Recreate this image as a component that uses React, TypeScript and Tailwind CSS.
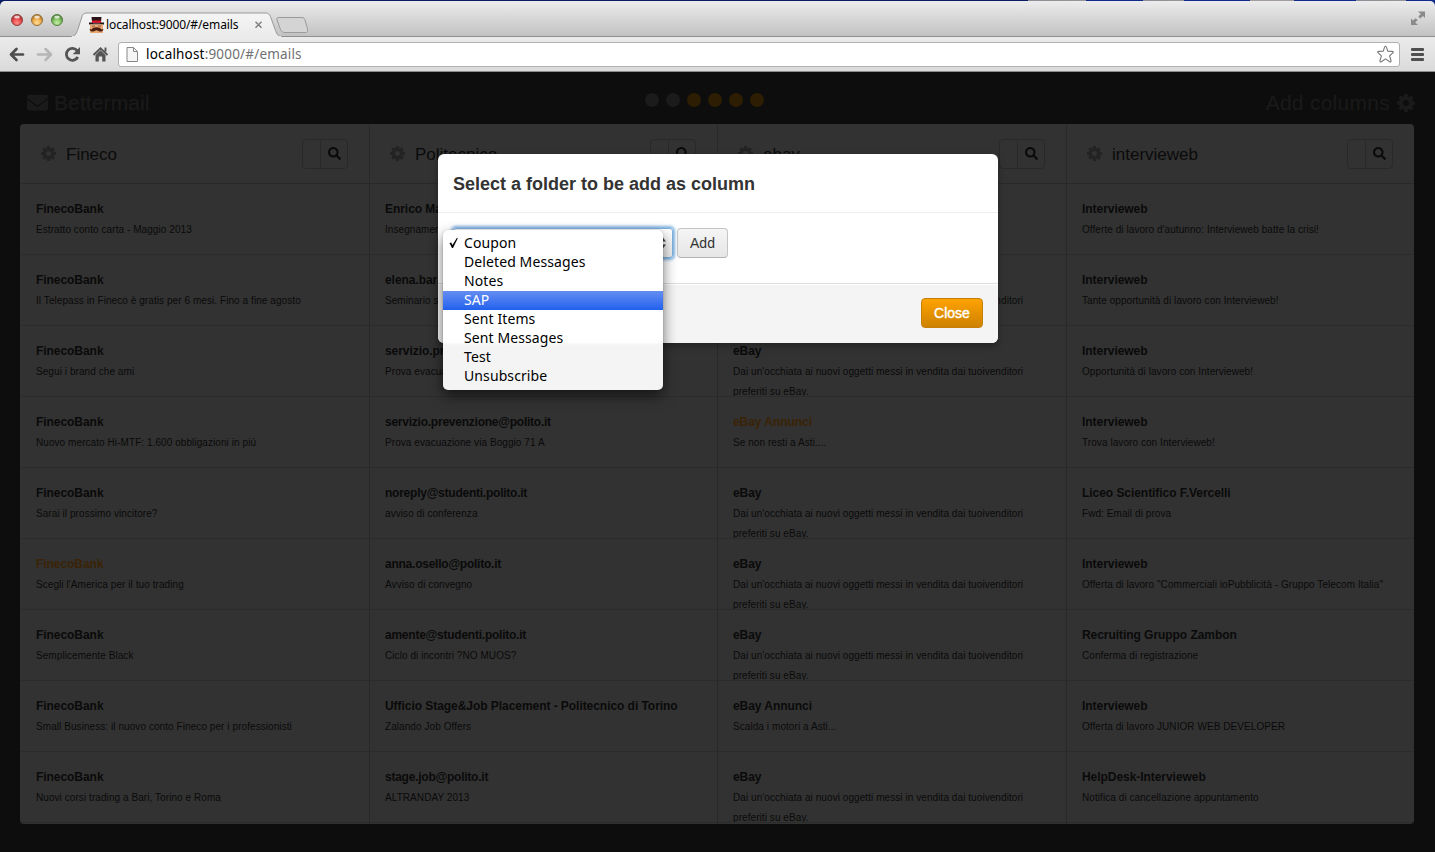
import React from 'react';
import { FaEnvelope, FaSearch } from 'react-icons/fa';

type Mail = { from: string; subject: string; unread?: boolean };
const EBAY = "Dai un'occhiata ai nuovi oggetti messi in vendita dai tuoivenditori preferiti su eBay.";

const columns: { name: string; mails: Mail[] }[] = [
  {
    name: 'Fineco',
    mails: [
      { from: 'FinecoBank', subject: 'Estratto conto carta - Maggio 2013' },
      { from: 'FinecoBank', subject: 'Il Telepass in Fineco è gratis per 6 mesi. Fino a fine agosto' },
      { from: 'FinecoBank', subject: 'Segui i brand che ami' },
      { from: 'FinecoBank', subject: 'Nuovo mercato Hi-MTF: 1.600 obbligazioni in più' },
      { from: 'FinecoBank', subject: 'Sarai il prossimo vincitore?' },
      { from: 'FinecoBank', subject: "Scegli l'America per il tuo trading", unread: true },
      { from: 'FinecoBank', subject: 'Semplicemente Black' },
      { from: 'FinecoBank', subject: 'Small Business: il nuovo conto Fineco per i professionisti' },
      { from: 'FinecoBank', subject: 'Nuovi corsi trading a Bari, Torino e Roma' },
    ],
  },
  {
    name: 'Politecnico',
    mails: [
      { from: 'Enrico Macii', subject: 'Insegnamenti' },
      { from: 'elena.baralis', subject: 'Seminario st' },
      { from: 'servizio.prev', subject: 'Prova evacuaz' },
      { from: 'servizio.prevenzione@polito.it', subject: 'Prova evacuazione via Boggio 71 A' },
      { from: 'noreply@studenti.polito.it', subject: 'avviso di conferenza' },
      { from: 'anna.osello@polito.it', subject: 'Avviso di convegno' },
      { from: 'amente@studenti.polito.it', subject: 'Ciclo di incontri ?NO MUOS?' },
      { from: 'Ufficio Stage&Job Placement - Politecnico di Torino', subject: 'Zalando Job Offers' },
      { from: 'stage.job@polito.it', subject: 'ALTRANDAY 2013' },
    ],
  },
  {
    name: 'ebay',
    mails: [
      { from: 'eBay', subject: 'Scalda i motori a Asti...' },
      { from: 'eBay', subject: EBAY },
      { from: 'eBay', subject: EBAY },
      { from: 'eBay Annunci', subject: 'Se non resti a Asti....', unread: true },
      { from: 'eBay', subject: EBAY },
      { from: 'eBay', subject: EBAY },
      { from: 'eBay', subject: EBAY },
      { from: 'eBay Annunci', subject: 'Scalda i motori a Asti...' },
      { from: 'eBay', subject: EBAY },
    ],
  },
  {
    name: 'intervieweb',
    mails: [
      { from: 'Intervieweb', subject: "Offerte di lavoro d'autunno: Intervieweb batte la crisi!" },
      { from: 'Intervieweb', subject: 'Tante opportunità di lavoro con Intervieweb!' },
      { from: 'Intervieweb', subject: 'Opportunità di lavoro con Intervieweb!' },
      { from: 'Intervieweb', subject: 'Trova lavoro con Intervieweb!' },
      { from: 'Liceo Scientifico F.Vercelli', subject: 'Fwd: Email di prova' },
      { from: 'Intervieweb', subject: 'Offerta di lavoro "Commerciali ioPubblicità - Gruppo Telecom Italia"' },
      { from: 'Recruiting Gruppo Zambon', subject: 'Conferma di registrazione' },
      { from: 'Intervieweb', subject: 'Offerta di lavoro JUNIOR WEB DEVELOPER' },
      { from: 'HelpDesk-Intervieweb', subject: 'Notifica di cancellazione appuntamento' },
    ],
  },
];

const folders = ['Coupon', 'Deleted Messages', 'Notes', 'SAP', 'Sent Items', 'Sent Messages', 'Test', 'Unsubscribe'];

function Gear({ className }: { className: string }) {
  return (
    <svg className={className} viewBox="0 128 1536 1536" fill="currentColor">
      <path d="M1024 896q0-106-75-181t-181-75-181 75-75 181 75 181 181 75 181-75 75-181zm512-109v222q0 12-8 23t-20 13l-185 28q-19 54-39 91 35 50 107 138 10 12 10 25t-9 23q-27 37-99 108t-94 71q-12 0-26-9l-138-108q-44 23-91 38-16 136-29 186-7 28-36 28h-222q-14 0-24.500-8.500t-11.500-21.500l-28-184q-49-16-90-37l-141 107q-10 9-25 9-14 0-25-11-126-114-165-168-7-10-7-23 0-12 8-23 15-21 51-66.500t54-70.500q-27-50-41-99l-183-27q-13-2-21-12.500t-8-23.500v-222q0-12 8-23t19-13l186-28q14-46 39-92-40-57-107-138-10-12-10-24 0-10 9-23 26-36 98.500-107.500t94.500-71.500q13 0 26 10l138 107q44-23 91-38 16-136 29-186 7-28 36-28h222q14 0 24.500 8.500t11.500 21.500l28 184q49 16 90 37l142-107q9-9 24-9 13 0 25 10 129 119 165 170 7 8 7 22 0 12-8 23-15 21-51 66.500t-54 70.500q26 50 41 98l183 28q13 2 21 12.500t8 23.500z" />
    </svg>
  );
}

function Favicon() {
  return (
    <svg width="15" height="16" viewBox="0 0 15 16">
      <path d="M2.500 0h10l-.5 5H3z" fill="#2a1216" />
      <path d="M3 3.500h9V6H3z" fill="#d0182c" />
      <path d="M0 5.500h3l1 .8h7l1-.8h3v2H0z" fill="#1c1113" />
      <path d="M1 7.500h13V16H1z" fill="#e8a873" />
      <path d="M3 8.500h3v1.300H3zM9 8.500h3v1.300H9z" fill="#b06c42" />
      <path d="M7.500 10.300c2.500 0 4 .8 5 2.200l2-.5c-.5 2.700-3.500 3-5 2l-2-.8-2 .8c-1.500 1-4.500.7-5-2l2 .5c1-1.400 2.500-2.200 5-2.200z" fill="#4a1f12" />
    </svg>
  );
}

function TitleBar() {
  return (
    <div className="h-[37px] shrink-0 bg-[linear-gradient(90deg,#0a1c63_0,#0a1c63_1028px,#8d8d96_1028px,#9b9696_1086px,#0f2c8c_1086px,#0f2c8c_1143px,#8d8d96_1143px,#9b9696_1184px,#0f2c8c_1184px,#0f2c8c_1250px,#a39c9c_1250px,#a39c9c_1294px,#0f2c8c_1294px,#0f2c8c_1356px,#8d8d96_1356px,#9b9696_1406px,#0f2c8c_1406px)] pt-px">
      <div className="relative flex h-9 rounded-t-[5px] border-b border-[#8f8f8f] bg-linear-to-b from-[#ececec] to-[#c2c2c2]">
        <svg className="absolute left-0 top-0" width="330" height="36" viewBox="0 0 330 36">
          <defs>
            <linearGradient id="tab" x1="0" y1="0" x2="0" y2="1">
              <stop offset="0" stopColor="#f5f5f5" />
              <stop offset="1" stopColor="#ebebeb" />
            </linearGradient>
            <radialGradient id="red" cx=".5" cy=".75" r=".65"><stop offset="0" stopColor="#ff8f88" /><stop offset=".6" stopColor="#e8474a" /><stop offset="1" stopColor="#a5302f" /></radialGradient>
            <radialGradient id="amber" cx=".5" cy=".75" r=".65"><stop offset="0" stopColor="#ffe09a" /><stop offset=".6" stopColor="#eeaa48" /><stop offset="1" stopColor="#a97227" /></radialGradient>
            <radialGradient id="green" cx=".5" cy=".75" r=".65"><stop offset="0" stopColor="#c8efa6" /><stop offset=".6" stopColor="#7fc062" /><stop offset="1" stopColor="#4a8136" /></radialGradient>
          </defs>
          <path d="M70 36C75 35.500 76 33 77.500 29.500L81.500 17C82.500 13.500 83.500 12 87 12H265C268.500 12 269.500 13 271 17L275.500 29.500C277 33.500 278 35.500 283 36Z" fill="url(#tab)" stroke="#999" />
          <path d="M72 36H281" stroke="#ebebeb" strokeWidth="2" />
          <path d="M279 16.500H302C303.500 16.500 304.500 17.500 305 19L307.500 28C308 30.500 307.500 31.500 305.500 31.500H285C282.500 31.500 281.500 30.500 280.500 28.500L277 19C276.500 17.500 277 16.500 279 16.500Z" fill="#d4d4d4" stroke="#9b9b9b" />
          <g strokeWidth="1">
            <circle cx="17" cy="19" r="5.500" fill="url(#red)" stroke="#8d4543" />
            <circle cx="37" cy="19" r="5.500" fill="url(#amber)" stroke="#94713c" />
            <circle cx="57" cy="19" r="5.500" fill="url(#green)" stroke="#55803f" />
          </g>
          <g fill="#fff" fillOpacity=".75">
            <ellipse cx="17" cy="16" rx="2.800" ry="1.500" /><ellipse cx="37" cy="16" rx="2.800" ry="1.500" /><ellipse cx="57" cy="16" rx="2.800" ry="1.500" />
          </g>
          <path d="M255.500 20.800l6 6M261.500 20.800l-6 6" stroke="#808080" strokeWidth="1.500" />
        </svg>
        <div className="relative flex h-full items-start pl-[89px] pt-[16px]">
          <Favicon />
          <span className="ml-[2px] font-['Noto_Sans',sans-serif] text-[12px] leading-[16px] tracking-[-0.1px] text-black">localhost:9000/#/emails</span>
        </div>
        <svg className="relative ml-auto mr-[9px] mt-[9px]" width="16" height="16" viewBox="0 0 16 16" fill="#8a8a8a">
          <path d="M8 1.500h7v6.500l-2.100-2-2.600 2.400-2-1.900 2.500-2.500zM1 15V8.500l2.100 2 2.500-2.300 2 1.900-2.400 2.400L8 15z" />
        </svg>
      </div>
    </div>
  );
}

function Toolbar() {
  return (
    <div className="flex h-[35px] shrink-0 items-center border-b border-[#8a8a8a] bg-linear-to-b from-[#ebebeb] to-[#dadada]">
      <svg width="118" height="34" viewBox="0 0 118 34" fill="none">
        <path d="M23 17.500H11M16.500 12l-5.500 5.500 5.500 5.500" stroke="#4d4d4d" strokeWidth="2.700" strokeLinecap="round" strokeLinejoin="round" />
        <path d="M38 17.500H50M45.500 12l5.500 5.500-5.500 5.500" stroke="#b5b5b5" strokeWidth="2.500" strokeLinecap="round" strokeLinejoin="round" />
        <path d="M77.300 13.800A6 6 0 1 0 77.800 20" stroke="#555" strokeWidth="2.800" />
        <path d="M80 10v7.300h-7.300z" fill="#555" />
        <path d="M93.500 18l7-6.800 7 6.800M105.500 10.500v4" stroke="#555" strokeWidth="1.900" />
        <path d="M95.500 18l5-4.800 5 4.800v6.500h-3.300v-5h-3.400v5h-3.300z" fill="#555" />
      </svg>
      <div className="flex h-[25px] flex-1 items-center rounded-[3px] border border-[#b0b0b0] bg-white">
        <svg className="ml-[7px]" width="13" height="17" viewBox="0 0 13 17">
          <path d="M1 1.500h6.500l4 4v10H1z" fill="#f5f5f5" stroke="#888" />
          <path d="M7.500 1.500v4h4" fill="none" stroke="#888" />
        </svg>
        <span className="ml-[7px] font-['Noto_Sans',sans-serif] text-[13.500px] leading-[20px] tracking-[0.18px] text-[#707070]">
          <span className="text-black">localhost</span>:9000/#/emails
        </span>
        <svg className="ml-auto mr-[4px]" width="19" height="19" viewBox="0 0 19 19">
          <path d="M9.500 1.200Q10.300 1.200 10.700 2.800L11.700 6.200 16 6.400Q18.200 6.700 16.800 7.900L13.600 10.800 15 15.500Q15.200 17.500 13.700 16.800L9.500 13.900 5.300 16.800Q3.800 17.500 4 15.500L5.400 10.800 2.200 7.900Q.8 6.700 3 6.400L7.300 6.200 8.300 2.800Q8.700 1.200 9.500 1.200z" fill="#fff" stroke="#777" strokeWidth="1.100" strokeLinejoin="round" />
        </svg>
      </div>
      <div className="ml-[11px] mr-[11px] flex w-[13px] flex-col gap-[2px]">
        <div className="h-[3px] rounded-[1px] bg-[#4f4f4f]" />
        <div className="h-[3px] rounded-[1px] bg-[#4f4f4f]" />
        <div className="h-[3px] rounded-[1px] bg-[#4f4f4f]" />
      </div>
    </div>
  );
}

function senderTracking(from: string) {
  return from.includes('@') ? 'tracking-[-0.24px]' : 'tracking-[-0.05px]';
}

function Column({ name, mails }: { name: string; mails: Mail[] }) {
  return (
    <div className="min-w-0 border-l border-[#292929] first:border-l-transparent">
      <div className="flex h-[60px] items-center border-b border-[#292929] pl-[20px] pr-[21px]">
        <Gear className="size-[15px] text-[#232323]" />
        <span className="ml-[10px] mt-[2px] text-[17px] leading-5 text-[#0b0b0b]">{name}</span>
        <div className="ml-auto flex h-[30px] w-[46px] overflow-hidden rounded border border-[#292929]">
          <div className="w-[18px] border-r border-[#292929]" />
          <div className="flex flex-1 items-center justify-center">
            <FaSearch className="size-[13px] text-[#0a0a0a]" />
          </div>
        </div>
      </div>
      {mails.map((m, i) => (
        <div key={i} className="h-[71px] overflow-hidden border-b border-[#2b2b2b] pl-[15px] pr-[30px] pt-[15px]">
          <div className={`h-[21px] whitespace-nowrap text-[12px] font-bold leading-5 ${senderTracking(m.from)} ${m.unread ? 'text-[#3a2306]' : 'text-[#0a0a0a]'}`}>{m.from}</div>
          <div className="text-[10px] leading-5 tracking-[0.07px] text-[#0a0a0a]">{m.subject}</div>
        </div>
      ))}
    </div>
  );
}

function FolderMenu() {
  return (
    <div className="absolute left-[5px] top-[76px] z-10 h-[160px] w-[220px] rounded-[5px] bg-linear-to-b from-white from-70% to-[#f4f4f4] to-72% pt-[4px] shadow-[0_6px_14px_rgba(0,0,0,0.55),0_0_1px_rgba(0,0,0,0.5)]">
      {folders.map((f) => (
        <div
          key={f}
          className={
            f === 'SAP'
              ? 'flex h-[19px] bg-linear-to-b from-[#648df0] to-[#2060ee] text-white'
              : 'flex h-[19px] text-black'
          }
        >
          <span className="flex w-[21px] justify-center pt-[3px]">
            {f === 'Coupon' && (
              <svg width="10" height="12" viewBox="0 0 10 12">
                <path d="M.5 6l1.700-.6 1.300 2.500L7.800 1l1 .3L4 11H3z" fill="#000" />
              </svg>
            )}
          </span>
          <span className="-mt-px font-['Noto_Sans',sans-serif] text-[14px] leading-[19px] tracking-[0.1px]">{f}</span>
        </div>
      ))}
    </div>
  );
}

function Modal() {
  return (
    <div className="absolute left-[438px] top-[154px] h-[189px] w-[560px] rounded-[6px] bg-white shadow-[0_3px_7px_rgba(0,0,0,0.3)]">
      <div className="flex h-[59px] items-center border-b border-[#eee] pl-[15px] pt-[2px] text-[18px] font-bold text-[#333]">
        Select a folder to be add as column
      </div>
      <div className="flex h-[70px] pl-[15px] pt-[15px]">
        <div className="flex h-[30px] w-[220px] items-center justify-end rounded-[3px] border border-[#7fb0de] bg-linear-to-b from-white to-[#eee] pr-[6px] shadow-[0_0_3px_2px_#82b4e2]">
          <svg width="7" height="12" viewBox="0 0 7 12" fill="#444"><path d="M0 4.500L3.500 0 7 4.500zM0 7.500L3.500 12 7 7.500z" /></svg>
        </div>
        <button className="ml-[4px] h-[30px] w-[51px] rounded border border-[#c5c5c5] border-b-[#b3b3b3] bg-linear-to-b from-[#f5f5f5] to-[#e6e6e6] text-[14px] leading-5 text-[#333]">Add</button>
      </div>
      <div className="flex h-[60px] items-start justify-end rounded-b-[6px] border-t border-[#ddd] bg-[#f4f4f4] pr-[15px] pt-[14px] shadow-[inset_0_1px_0_#fff]">
        <button className="h-[30px] w-[62px] rounded border border-[#c67e05] bg-linear-to-b from-[#ffa200] to-[#cd8200] text-[14px] leading-5 text-white [-webkit-text-stroke:0.4px_white]">Close</button>
      </div>
      <FolderMenu />
    </div>
  );
}

export default function App() {
  return (
    <div className="relative flex h-[852px] w-[1435px] flex-col overflow-hidden bg-[#0d0d0d] font-['Liberation_Sans',Arial,sans-serif]">
      <TitleBar />
      <Toolbar />
      <div className="flex h-[52px] shrink-0 items-center pl-[27px] pr-[20px] pt-[9px] text-[21px] text-[#1a1a1a]">
        <div className="flex w-[618px] items-center">
          <FaEnvelope className="size-[21px]" />
          <span className="ml-[6px] tracking-[0.1px] [-webkit-text-stroke:0.3px_#1a1a1a]">Bettermail</span>
        </div>
        <div className="flex gap-[7px] pb-[5px]">
          {[0, 1, 2, 3, 4, 5].map((n) => (
            <div key={n} className={n < 2 ? 'size-[14px] rounded-full bg-[#1b1b1b]' : 'size-[14px] rounded-full bg-[#2d1d03]'} />
          ))}
        </div>
        <div className="flex flex-1 items-center justify-end">
          <span className="mr-[7px] tracking-[0.27px]">Add columns</span>
          <Gear className="size-[18px]" />
        </div>
      </div>
      <div className="ml-[20px] grid h-[700px] w-[1394px] shrink-0 grid-cols-[349px_348px_349px_348px] overflow-hidden rounded-[4px] bg-[#323232]">
        {columns.map((c) => (
          <Column key={c.name} name={c.name} mails={c.mails} />
        ))}
      </div>
      <Modal />
    </div>
  );
}
